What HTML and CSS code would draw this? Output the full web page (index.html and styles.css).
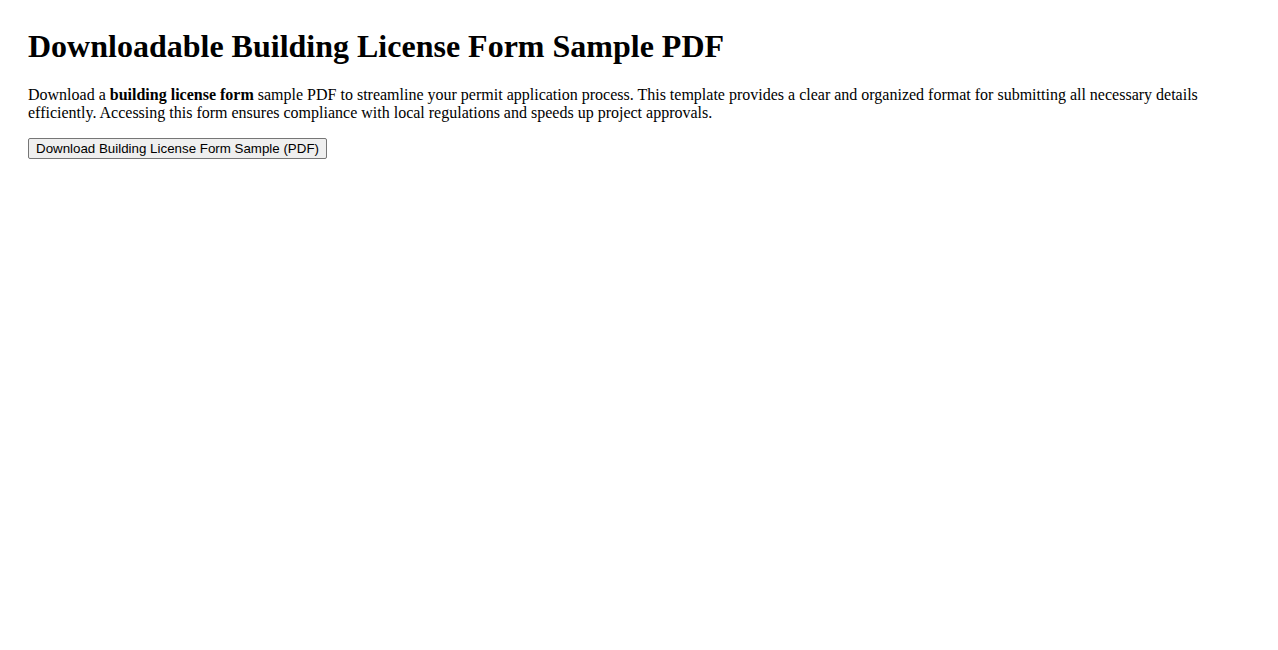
FILE: index.html
```html
<!DOCTYPE html>
<html lang="en">
<head>
  <meta charset="UTF-8">
  <meta name="viewport" content="width=device-width, initial-scale=1">
  <title>Building License Form Sample PDF</title>
  <link rel="stylesheet" href="styles.css">
</head>
<body>
  <div class="page">
    <h1>Downloadable Building License Form Sample PDF</h1>
    <p>Download a <strong>building license form</strong> sample PDF to streamline your permit application process. This template provides a clear and organized format for submitting all necessary details efficiently. Accessing this form ensures compliance with local regulations and speeds up project approvals.</p>
    <button type="button" class="download-btn">Download Building License Form Sample (PDF)</button>
  </div>
</body>
</html>
```

FILE: styles.css
```css
body {
  margin: 8px;
  font-family: "Liberation Serif", "Times New Roman", serif;
  font-size: 16px;
  color: #000;
  background: #fff;
}

.page {
  padding: 20px;
}

.page h1 {
  margin: 0 0 21px;
  font-size: 32px;
}

.page p {
  margin: 0 0 16px;
}

.download-btn {
  font-family: "Liberation Sans", Arial, sans-serif;
  font-size: 13.33px;
  padding: 2px 7px;
  background: #efefef;
  border: 1px solid #767676;
  border-radius: 2px;
  color: #000;
  cursor: pointer;
}
```
